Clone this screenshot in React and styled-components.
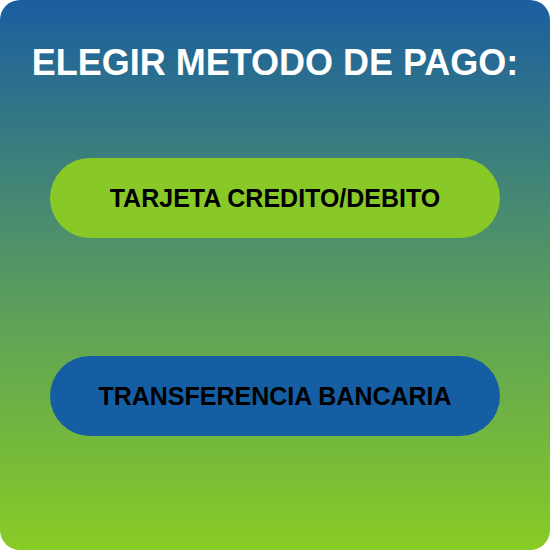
import styled, { createGlobalStyle } from "styled-components";

const GlobalStyle = createGlobalStyle`
    html, body {
        margin: 0;
        padding: 0;
        background: #ffffff;
    }
    * {
        box-sizing: border-box;
    }
`;

export default function App() {
    return (
        <>
            <GlobalStyle />
            <Card>
                <Title>ELEGIR METODO DE PAGO:</Title>
                <Options>
                    <Option color="#88c928">TARJETA CREDITO/DEBITO</Option>
                    <Option color="#155ea3">TRANSFERENCIA BANCARIA</Option>
                </Options>
            </Card>
        </>
    );
}

const Card = styled.div`
    width: 550px;
    height: 550px;
    border-radius: 20px;
    background: linear-gradient(180deg, #1a5ea0 0%, #5b9e5c 55%, #88cc25 100%);
    display: flex;
    flex-direction: column;
    align-items: center;
    padding-top: 42px;
    font-family: "Liberation Sans", Arial, sans-serif;
`;

const Title = styled.h1`
    margin: 0;
    color: #ffffff;
    font-size: 36px;
    line-height: 42px;
    font-weight: 700;
`;

const Options = styled.div`
    display: flex;
    flex-direction: column;
    gap: 118px;
    margin-top: 74px;
`;

const Option = styled.div`
    width: 450px;
    height: 80px;
    border-radius: 40px;
    background-color: ${props => props.color};
    display: flex;
    justify-content: center;
    align-items: center;
    color: #000000;
    font-size: 25px;
    font-weight: 700;
`;
